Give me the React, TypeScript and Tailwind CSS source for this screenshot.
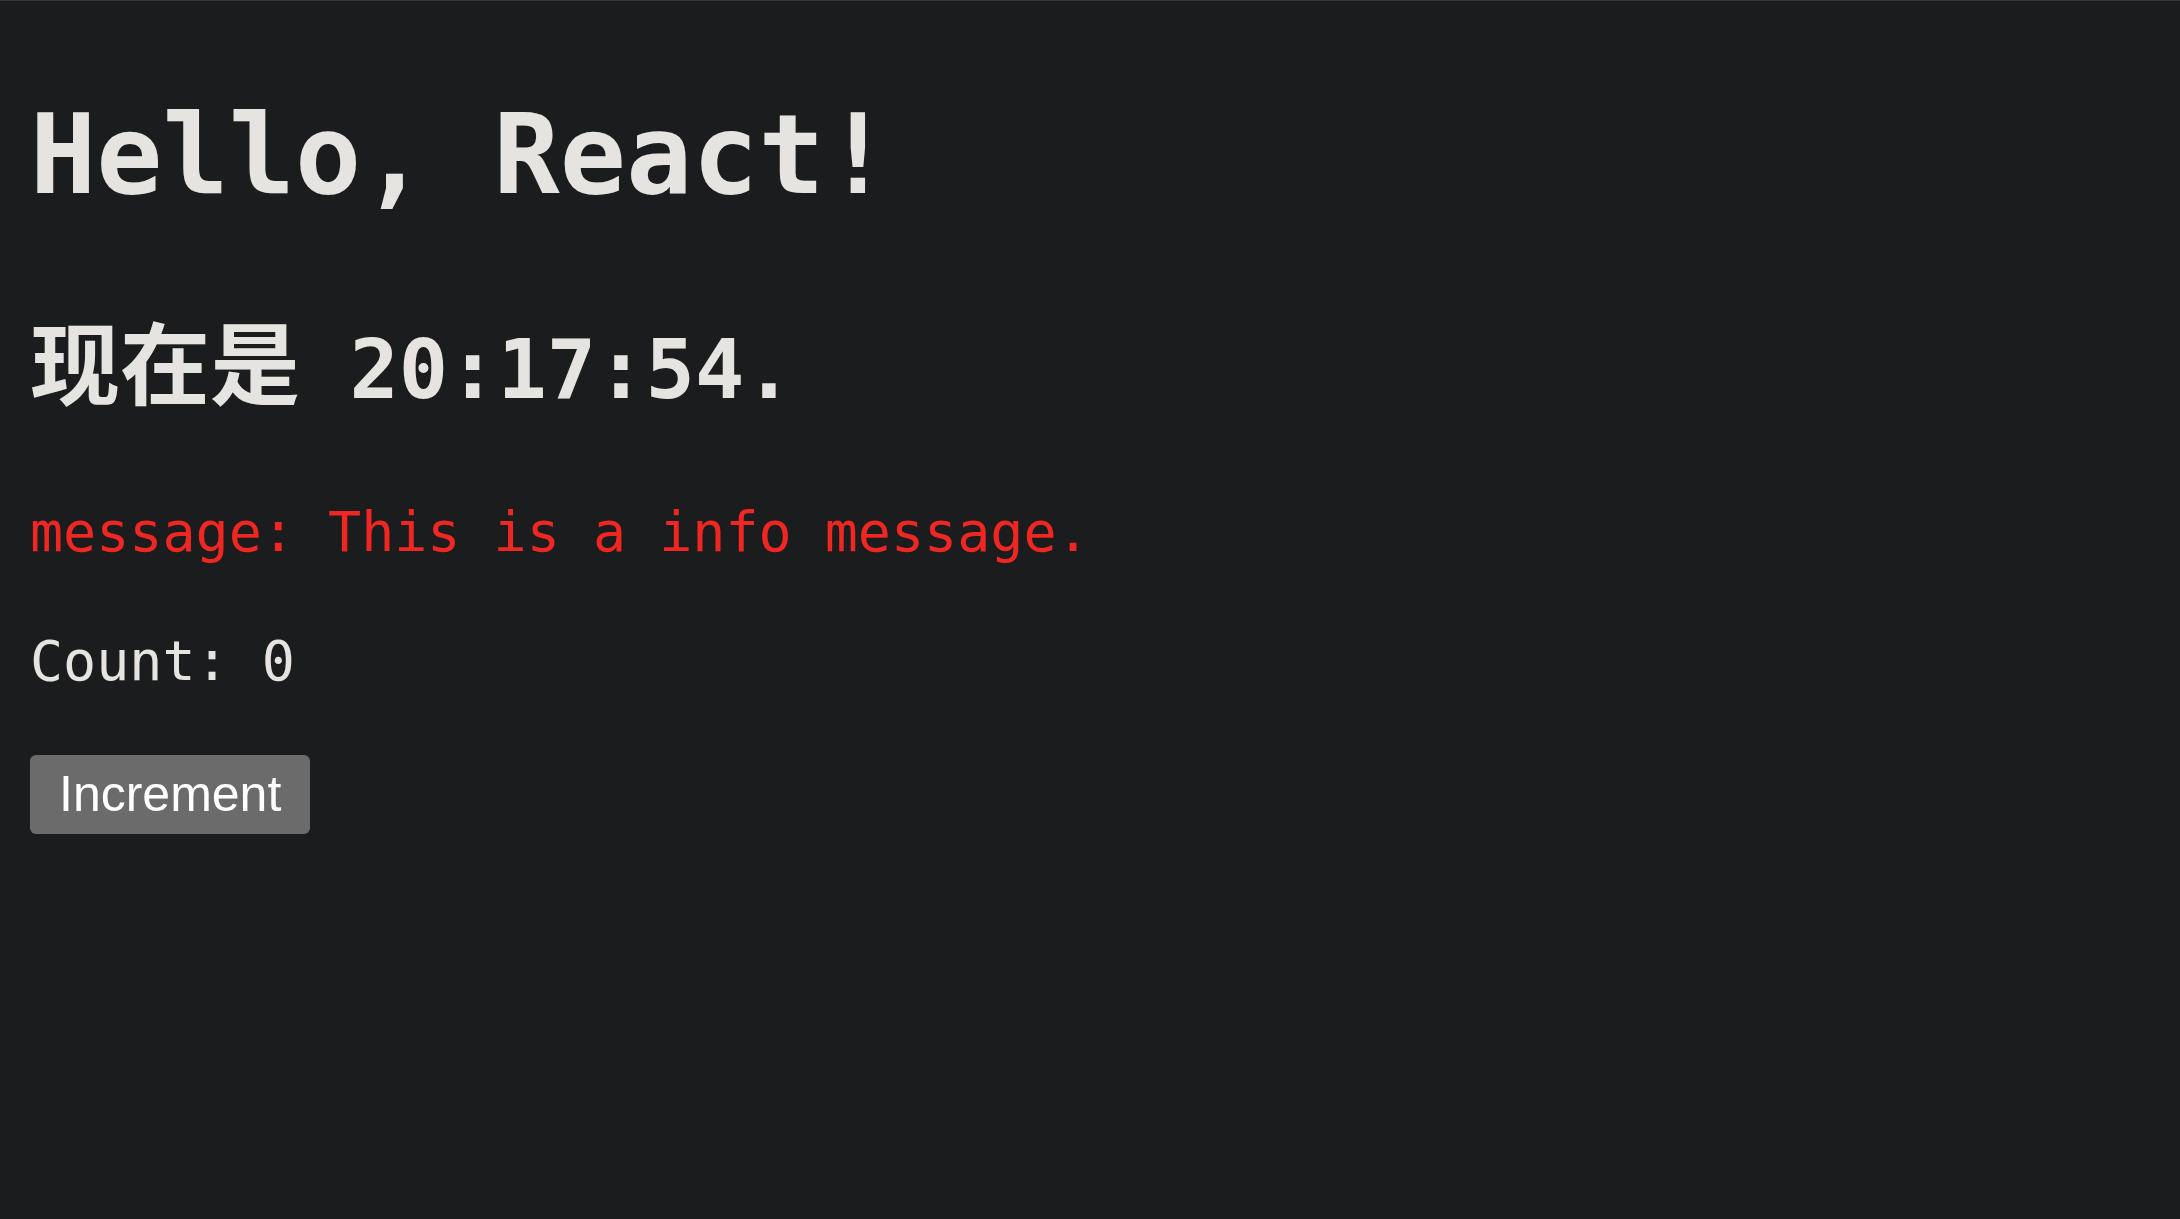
import { useState } from 'react';

const App = () => {
  const [count, setCount] = useState(0);
  const time = '20:17:54';
  const level = 'info';

  return (
    <div className="min-h-screen bg-[#1b1c1e] border-t border-[#3a3640] pl-[30px] text-[#e6e4e0] font-['DejaVu_Sans_Mono','Noto_Sans_CJK_SC',monospace]">
      <h1 className="mt-[90px] text-[110px] leading-[128px] font-bold">Hello, React!</h1>
      <h2 className="mt-[103px] text-[82px] leading-[96px] font-bold">
        <span className="text-[90px] leading-[60px] font-['Noto_Sans_CJK_SC',sans-serif]">现在是</span> {time}.
      </h2>
      <p className="mt-[82px] text-[55px] leading-[64px] text-[#ee2722]">
        message: This is a {level} message.
      </p>
      <p className="mt-[65px] text-[55px] leading-[64px]">Count: {count}</p>
      <div className="mt-[62px]">
        <button
          onClick={() => setCount(count + 1)}
          className="h-[79px] px-[29px] rounded-[6px] bg-[#6b6b6b] text-white text-[50px] font-['Liberation_Sans',Arial,sans-serif]"
        >
          Increment
        </button>
      </div>
    </div>
  );
};

export default App;
